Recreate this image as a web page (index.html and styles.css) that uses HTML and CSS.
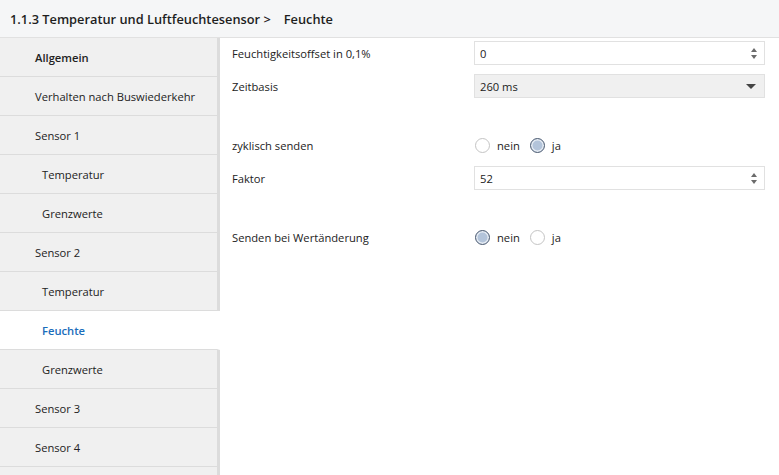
FILE: index.html
```html
<!DOCTYPE html>
<html lang="de">
<head>
<meta charset="utf-8">
<title>Feuchte</title>
<link rel="stylesheet" href="styles.css">
</head>
<body>
<header class="topbar">
  <span class="crumb">1.1.3 Temperatur und Luftfeuchtesensor &gt;</span>
  <span class="crumb current">Feuchte</span>
</header>
<div class="main">
  <nav class="sidebar">
    <div class="nav-item bold">Allgemein</div>
    <div class="nav-item">Verhalten nach Buswiederkehr</div>
    <div class="nav-item">Sensor 1</div>
    <div class="nav-item sub">Temperatur</div>
    <div class="nav-item sub">Grenzwerte</div>
    <div class="nav-item">Sensor 2</div>
    <div class="nav-item sub">Temperatur</div>
    <div class="nav-item sub active">Feuchte</div>
    <div class="nav-item sub">Grenzwerte</div>
    <div class="nav-item">Sensor 3</div>
    <div class="nav-item">Sensor 4</div>
    <div class="nav-item"></div>
  </nav>
  <section class="content">
    <div class="row">
      <div class="label">Feuchtigkeitsoffset in 0,1%</div>
      <div class="field input">
        <span class="value">0</span>
        <span class="spin"><span class="up"></span><span class="down"></span></span>
      </div>
    </div>
    <div class="row">
      <div class="label">Zeitbasis</div>
      <div class="field select">
        <span class="value">260 ms</span>
        <span class="caret"></span>
      </div>
    </div>
    <div class="spacer s1"></div>
    <div class="row">
      <div class="label">zyklisch senden</div>
      <div class="radios">
        <span class="radio"></span><span class="rlabel">nein</span>
        <span class="radio checked"></span><span class="rlabel">ja</span>
      </div>
    </div>
    <div class="row">
      <div class="label">Faktor</div>
      <div class="field input">
        <span class="value">52</span>
        <span class="spin"><span class="up"></span><span class="down"></span></span>
      </div>
    </div>
    <div class="spacer s2"></div>
    <div class="row">
      <div class="label">Senden bei Wertänderung</div>
      <div class="radios">
        <span class="radio checked"></span><span class="rlabel">nein</span>
        <span class="radio"></span><span class="rlabel">ja</span>
      </div>
    </div>
  </section>
</div>
</body>
</html>
```
FILE: styles.css
```css
* { box-sizing: border-box; }
html, body { margin: 0; padding: 0; }
body {
  width: 779px;
  height: 475px;
  overflow: hidden;
  background: #ffffff;
  font-family: "Open Sans", "Noto Sans", sans-serif;
  font-size: 11.2px;
  color: #222222;
}
.topbar {
  height: 38px;
  background: #f5f6f7;
  border-bottom: 1px solid #e1e1e1;
  display: flex;
  align-items: center;
  padding-left: 10px;
  font-size: 12.8px;
  font-weight: 600;
  color: #1e1e1e;
  gap: 13px;
}
.main {
  display: flex;
  height: 437px;
  overflow: hidden;
}
.sidebar {
  width: 220px;
  flex: none;
  display: flex;
  flex-direction: column;
}
.nav-item {
  height: 39px;
  flex: none;
  background: #f0f0f0;
  border-bottom: 1px solid #dcdcdc;
  border-right: 3px solid #dcdcdc;
  padding-left: 35px;
  display: flex;
  align-items: center;
  color: #222222;
}
.nav-item.sub { padding-left: 42px; }
.nav-item.bold { font-weight: 600; }
.nav-item.active {
  background: #ffffff;
  border-right-color: #ffffff;
  color: #1a6dbb;
  font-weight: 600;
}
.content {
  flex: 1;
  padding: 3px 14px 0 12px;
  display: flex;
  flex-direction: column;
  gap: 9px;
}
.row {
  display: flex;
  align-items: center;
  height: 24px;
}
.label {
  width: 242px;
  flex: none;
}
.spacer.s1 { height: 17px; }
.spacer.s2 { height: 17px; }
.field {
  width: 291px;
  height: 24px;
  border: 1px solid #e1e1e1;
  display: flex;
  align-items: center;
  padding-left: 5px;
  padding-right: 7px;
  justify-content: space-between;
}
.field.select { background: #f0f0f0; }
.spin {
  display: flex;
  flex-direction: column;
  gap: 3px;
  align-items: center;
}
.spin .up, .spin .down {
  width: 0; height: 0;
  border-left: 3.5px solid transparent;
  border-right: 3.5px solid transparent;
}
.spin .up { border-bottom: 4px solid #6b6b6b; }
.spin .down { border-top: 4px solid #6b6b6b; }
.caret {
  width: 0; height: 0;
  border-left: 5px solid transparent;
  border-right: 5px solid transparent;
  border-top: 5px solid #444444;
  margin-right: 1px;
}
.radios {
  display: flex;
  align-items: center;
  padding-left: 1px;
}
.radio {
  width: 15px;
  height: 15px;
  border-radius: 50%;
  border: 1px solid #c4c4c4;
  background: #ffffff;
  flex: none;
}
.radio.checked {
  border: 1px solid #4f5d72;
  background: #b3c4da;
  box-shadow: inset 0 0 0 1.5px #e6ecf3;
}
.rlabel { margin-left: 7px; margin-right: 10px; }
```
